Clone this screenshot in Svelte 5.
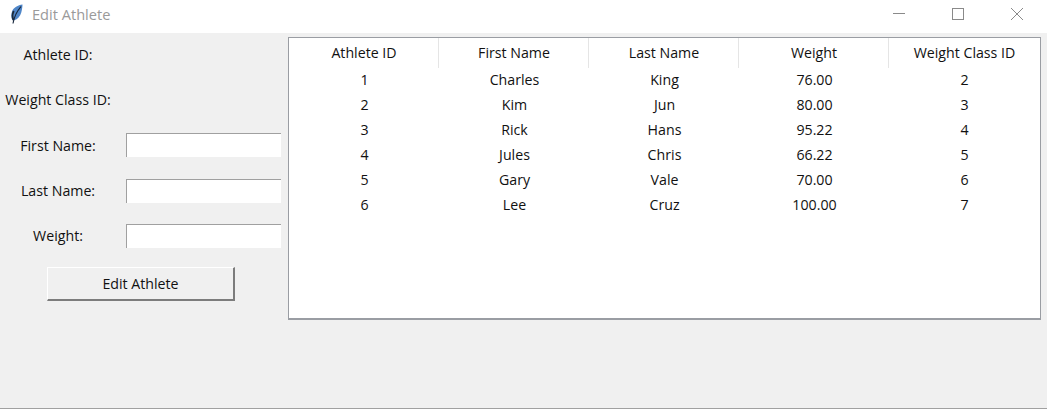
<script>
  const columns = ['Athlete ID', 'First Name', 'Last Name', 'Weight', 'Weight Class ID'];
  const athletes = [
    [1, 'Charles', 'King', '76.00', 2],
    [2, 'Kim', 'Jun', '80.00', 3],
    [3, 'Rick', 'Hans', '95.22', 4],
    [4, 'Jules', 'Chris', '66.22', 5],
    [5, 'Gary', 'Vale', '70.00', 6],
    [6, 'Lee', 'Cruz', '100.00', 7]
  ];
</script>

<div class="window">
  <header class="titlebar">
    <svg class="feather" width="12" height="20" viewBox="0 0 12 20">
      <path d="M11.500 .5C7 1 2.500 3.500 1 7.500c-1 2.800-.8 6 .2 8.500l2 .3c3.500-1 6-4 7-7.500.8-2.800 1.200-5.800 1.300-8.300z" fill="#4f86c8"/>
      <path d="M10 2.500C7 6 3.500 10 2 19.500" stroke="#16263c" stroke-width="1.100" fill="none"/>
      <path d="M2.500 16C1 13 1.200 10 2.800 7" stroke="#1c2a3a" stroke-width="1.800" fill="none"/>
    </svg>
    <span class="title">Edit Athlete</span>
    <div class="controls">
      <svg width="12" height="12" viewBox="0 0 12 12"><path d="M0 5.500h12" stroke="#8a8a8a"/></svg>
      <svg width="12" height="12" viewBox="0 0 12 12"><rect x=".5" y=".5" width="11" height="11" fill="none" stroke="#8a8a8a"/></svg>
      <svg width="12" height="12" viewBox="0 0 12 12"><path d="M0 0l12 12M12 0L0 12" stroke="#8a8a8a"/></svg>
    </div>
  </header>

  <main class="content">
    <form class="form">
      <span class="label">Athlete ID:</span><span></span>
      <span class="label">Weight Class ID:</span><span></span>
      <span class="label">First Name:</span><input type="text" />
      <span class="label">Last Name:</span><input type="text" />
      <span class="label">Weight:</span><input type="text" />
      <button type="button">Edit Athlete</button>
    </form>

    <section class="tree">
      <div class="row head">
        {#each columns as col}
          <div class="cell">{col}</div>
        {/each}
      </div>
      {#each athletes as athlete}
        <div class="row">
          {#each athlete as value}
            <div class="cell">{value}</div>
          {/each}
        </div>
      {/each}
    </section>
  </main>
</div>

<style>
  :global(body) {
    margin: 0;
    background: #f0f0f0;
  }

  .window {
    display: flex;
    flex-direction: column;
    width: 1047px;
    height: 409px;
    box-sizing: border-box;
    border-bottom: 1px solid #a0a0a0;
    background: #f0f0f0;
    font-family: 'Open Sans', 'Noto Sans', sans-serif;
    font-size: 14.2px;
    color: #111;
    overflow: hidden;
  }

  .titlebar {
    display: flex;
    align-items: center;
    height: 33px;
    flex-shrink: 0;
    padding: 0 24px 6px 11px;
    box-sizing: border-box;
    background: #fff;
  }

  .feather {
    margin-right: 9px;
  }

  .title {
    color: #9a9a9a;
    font-size: 14.6px;
  }

  .controls {
    display: flex;
    gap: 47px;
    margin-left: auto;
  }

  .content {
    display: flex;
    align-items: flex-start;
    flex: 1;
  }

  .form {
    display: grid;
    grid-template-columns: 116px 155px;
    grid-auto-rows: 45.3px;
    column-gap: 10px;
    align-items: center;
    width: 288px;
    flex-shrink: 0;
    box-sizing: border-box;
    margin-top: -1px;
  }

  .label {
    text-align: center;
  }

  input {
    width: 155px;
    height: 24px;
    box-sizing: border-box;
    padding: 0;
    border: none;
    border-top: 1px solid #a0a0a0;
    border-left: 1px solid #a0a0a0;
    background: #fff;
    outline: none;
  }

  button {
    grid-column: 1 / -1;
    justify-self: start;
    margin: 5px 0 0 47px;
    width: 188px;
    height: 34px;
    padding: 0;
    box-sizing: border-box;
    border: none;
    border-top: 1px solid #fff;
    border-left: 1px solid #fff;
    border-right: 2px solid #7c7c7c;
    border-bottom: 2px solid #7c7c7c;
    background: #f0f0f0;
    font: inherit;
    color: inherit;
  }

  .tree {
    width: 753px;
    height: 283px;
    margin-top: 4px;
    box-sizing: border-box;
    border: 1px solid #9a9da3;
    border-width: 1px 1px 2px 1px;
    background: #fff;
  }

  .row {
    display: grid;
    grid-template-columns: repeat(5, 150px);
    height: 25px;
    padding-bottom: 2px;
    box-sizing: border-box;
    align-items: center;
  }

  .row.head {
    height: 30px;
    padding-bottom: 0;
    align-items: stretch;
  }

  .cell {
    padding-left: 1px;
    text-align: center;
  }

  .head .cell {
    display: flex;
    align-items: center;
    justify-content: center;
    box-sizing: border-box;
    padding-bottom: 2px;
    border-right: 1px solid #e5e5e5;
  }

  .head .cell:last-child {
    border-right: none;
  }
</style>
